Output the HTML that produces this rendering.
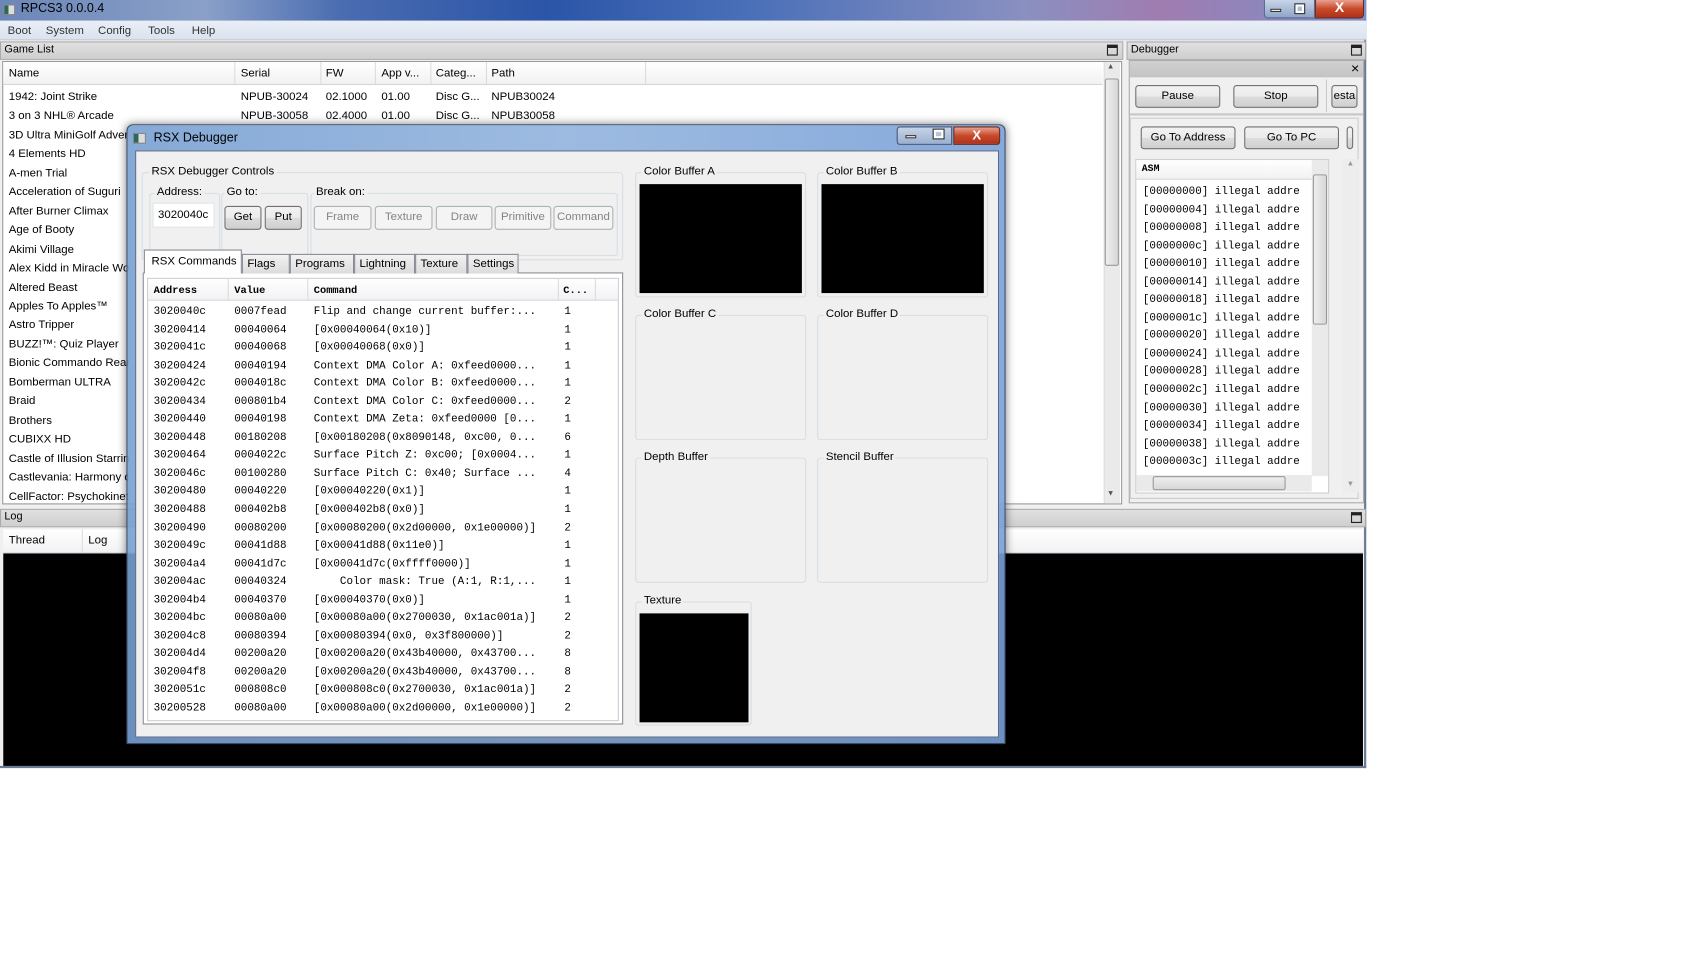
<!DOCTYPE html>
<html><head><meta charset="utf-8"><style>
*{box-sizing:border-box;margin:0;padding:0}
body{width:1708px;height:972px;overflow:hidden;background:#fff;font-family:"Liberation Sans",sans-serif;font-size:10.5px;color:#000}
#r{position:absolute;left:0;top:0;width:1568px;height:892px;transform:scale(1.0895);transform-origin:0 0}
.a{position:absolute}
.t{position:absolute;white-space:nowrap}
.m{font-family:"Liberation Mono",monospace;font-size:10px}
.btn{position:absolute;border:1px solid #707070;border-radius:3px;background:linear-gradient(#f2f2f2,#ebebeb 50%,#dddddd 51%,#cfcfcf);text-align:center;font-size:10.5px;line-height:19px}
.dis{border-color:#adb2b5;background:#f4f4f4;color:#838383}
.grp{position:absolute;border:1px solid #d5dfe5;border-radius:3px}
.gl{position:absolute;background:#f0f0f0;padding:0 2px;font-size:10.5px;white-space:nowrap}
.hdr{position:absolute;background:linear-gradient(#fff,#f1f2f4);border-bottom:1px solid #d5d5d5}
.sep{position:absolute;top:0;bottom:0;width:1px;background:#dcdcdc}
.tab{position:absolute;top:233px;height:18px;border:1px solid #898c95;border-bottom:none;background:linear-gradient(#f2f2f2,#dcdcdc);font-size:10.5px;line-height:16px;padding-left:4px}
</style></head><body><div id="r">
<div class="a" style="left:0;top:0;width:1254px;height:705px;background:#f0f0f0;border-right:2px solid #6a7a95;border-bottom:2px solid #6a7a95"></div>
<div class="a" style="left:0;top:0;width:1254px;height:19px;background:linear-gradient(90deg,#6b86b8 0%,#8aa0c8 15%,#4a6cb0 25%,#2b55a8 40%,#4a70b8 55%,#8a90c0 75%,#a07cb0 85%,#7a90c8 100%)"></div>
<div class="a" style="left:3px;top:4px;width:11px;height:10px;background:linear-gradient(90deg,#2a6a5a 40%,#ddd 40%);border:1px solid #888"></div>
<div class="t" style="left:19px;top:2px;font-size:11.5px;color:#000">RPCS3 0.0.0.4</div>
<div class="a" style="left:1160px;top:0;width:47px;height:17px;border:1px solid #5a6a8a;border-top:none;border-radius:0 0 0 4px;background:linear-gradient(#c8d4e8,#8ea4c8)"></div>
<div class="a" style="left:1166px;top:8px;width:10px;height:3px;background:#fff;border:1px solid #333"></div>
<div class="a" style="left:1189px;top:4px;width:8px;height:8px;border:2px solid #fff;outline:1px solid #333"></div>
<div class="a" style="left:1207px;top:0;width:45px;height:17px;border:1px solid #6a2a1a;border-top:none;border-radius:0 0 4px 0;background:linear-gradient(#e8a090,#c84a2a 50%,#b0301a);color:#fff;font-weight:bold;text-align:center;font-size:13px;line-height:14px">X</div>
<div class="a" style="left:0;top:19px;width:1254px;height:18px;background:linear-gradient(#e9eef6,#dbe3ef);border-bottom:1px solid #c0c8d4"></div>
<div class="t" style="left:7px;top:22px;color:#333">Boot</div><div class="t" style="left:42px;top:22px;color:#333">System</div><div class="t" style="left:90px;top:22px;color:#333">Config</div><div class="t" style="left:136px;top:22px;color:#333">Tools</div><div class="t" style="left:176px;top:22px;color:#333">Help</div>
<div class="a" style="left:0;top:38px;width:1031px;height:17px;background:linear-gradient(#e0e0e0,#cfcfcf);border:1px solid #aaa"></div>
<div class="t" style="left:4px;top:40px;font-size:10px">Game List</div>
<div class="a" style="left:1016px;top:41px;width:10px;height:10px;border:1px solid #222;border-top-width:3px"></div>
<div class="a" style="left:2px;top:56px;width:1028px;height:407px;background:#fff;border:1px solid #999"></div>
<div class="hdr" style="left:3px;top:57px;width:1009px;height:21px">
<div class="sep" style="left:212px"></div><div class="sep" style="left:291px"></div><div class="sep" style="left:341px"></div><div class="sep" style="left:392px"></div><div class="sep" style="left:443px"></div><div class="sep" style="left:589px"></div></div>
<div class="t" style="left:8px;top:61px">Name</div><div class="t" style="left:221px;top:61px">Serial</div><div class="t" style="left:299px;top:61px">FW</div><div class="t" style="left:350px;top:61px">App v...</div><div class="t" style="left:400px;top:61px">Categ...</div><div class="t" style="left:451px;top:61px">Path</div>
<div class="a" style="left:8px;top:81px;width:110px;height:380px;overflow:hidden;line-height:17.45px;white-space:nowrap">1942: Joint Strike<br>3 on 3 NHL® Arcade<br>3D Ultra MiniGolf Adventures<br>4 Elements HD<br>A-men Trial<br>Acceleration of Suguri<br>After Burner Climax<br>Age of Booty<br>Akimi Village<br>Alex Kidd in Miracle World<br>Altered Beast<br>Apples To Apples™<br>Astro Tripper<br>BUZZ!™: Quiz Player<br>Bionic Commando Rearmed<br>Bomberman ULTRA<br>Braid<br>Brothers<br>CUBIXX HD<br>Castle of Illusion Starring<br>Castlevania: Harmony of<br>CellFactor: Psychokinetic</div>
<div class="t" style="left:221px;top:81px;line-height:17.45px">NPUB-30024<br>NPUB-30058</div>
<div class="t" style="left:299px;top:81px;line-height:17.45px">02.1000<br>02.4000</div>
<div class="t" style="left:350px;top:81px;line-height:17.45px">01.00<br>01.00</div>
<div class="t" style="left:400px;top:81px;line-height:17.45px">Disc G...<br>Disc G...</div>
<div class="t" style="left:451px;top:81px;line-height:17.45px">NPUB30024<br>NPUB30058</div>
<div class="a" style="left:1013px;top:57px;width:15px;height:405px;background:#eaeaea;border-left:1px solid #ddd"></div>
<div class="a" style="left:1014px;top:72px;width:13px;height:172px;background:linear-gradient(90deg,#eee,#d8d8d8);border:1px solid #999;border-radius:2px"></div>
<div class="t" style="left:1016px;top:58px;font-size:7px;color:#555">▲</div><div class="t" style="left:1016px;top:450px;font-size:7px;color:#555">▼</div>
<div class="a" style="left:0;top:467px;width:1254px;height:17px;background:linear-gradient(#e0e0e0,#cfcfcf);border:1px solid #aaa"></div>
<div class="t" style="left:4px;top:469px;font-size:10px">Log</div>
<div class="a" style="left:1240px;top:470px;width:10px;height:10px;border:1px solid #222;border-top-width:3px"></div>
<div class="hdr" style="left:3px;top:486px;width:1248px;height:22px"><div class="sep" style="left:72px"></div></div>
<div class="t" style="left:8px;top:490px">Thread</div><div class="t" style="left:81px;top:490px">Log</div>
<div class="a" style="left:3px;top:508px;width:1248px;height:195px;background:#000"></div>
<div class="a" style="left:1034px;top:38px;width:220px;height:17px;background:linear-gradient(#e0e0e0,#cfcfcf);border:1px solid #aaa"></div>
<div class="t" style="left:1038px;top:40px;font-size:10px">Debugger</div>
<div class="a" style="left:1240px;top:41px;width:10px;height:10px;border:1px solid #222;border-top-width:3px"></div>
<div class="a" style="left:1036px;top:55px;width:216px;height:407px;border:1px solid #aaa;background:#f0f0f0"></div>
<div class="a" style="left:1037px;top:56px;width:214px;height:15px;background:linear-gradient(#d0d0d0,#c4c4c4)"></div>
<div class="t" style="left:1240px;top:55px;font-size:13px">×</div>
<div class="btn" style="left:1042px;top:78px;width:78px;height:21px">Pause</div>
<div class="btn" style="left:1132px;top:78px;width:78px;height:21px">Stop</div>
<div class="a" style="left:1217px;top:73px;width:1px;height:30px;background:#ccc"></div>
<div class="btn" style="left:1222px;top:78px;width:24px;height:21px;overflow:hidden">esta</div>
<div class="a" style="left:1037px;top:104px;width:214px;height:2px;background:#c8c8c8"></div>
<div class="a" style="left:1037px;top:108px;width:210px;height:350px;border:1px solid #ccc"></div>
<div class="btn" style="left:1047px;top:116px;width:87px;height:21px">Go To Address</div>
<div class="btn" style="left:1142px;top:116px;width:87px;height:21px">Go To PC</div>
<div class="btn" style="left:1236px;top:116px;width:6px;height:21px"></div>
<div class="a" style="left:1042px;top:146px;width:178px;height:307px;background:#fff;border:1px solid #ccc"></div>
<div class="hdr" style="left:1043px;top:147px;width:161px;height:18px"></div>
<div class="t m" style="left:1048px;top:150px;font-weight:bold;font-size:9px">ASM</div>
<div class="t m" style="left:1049px;top:169px;line-height:16.55px;font-size:10px">[00000000] illegal addre<br>[00000004] illegal addre<br>[00000008] illegal addre<br>[0000000c] illegal addre<br>[00000010] illegal addre<br>[00000014] illegal addre<br>[00000018] illegal addre<br>[0000001c] illegal addre<br>[00000020] illegal addre<br>[00000024] illegal addre<br>[00000028] illegal addre<br>[0000002c] illegal addre<br>[00000030] illegal addre<br>[00000034] illegal addre<br>[00000038] illegal addre<br>[0000003c] illegal addre</div>
<div class="a" style="left:1204px;top:147px;width:15px;height:290px;background:#eaeaea"></div>
<div class="a" style="left:1205px;top:160px;width:13px;height:138px;background:linear-gradient(90deg,#eee,#d8d8d8);border:1px solid #999;border-radius:2px"></div>
<div class="a" style="left:1043px;top:436px;width:161px;height:15px;background:#eaeaea"></div>
<div class="a" style="left:1058px;top:437px;width:122px;height:13px;background:linear-gradient(#eee,#d8d8d8);border:1px solid #999;border-radius:2px"></div>
<div class="a" style="left:1232px;top:146px;width:15px;height:306px;background:#ededed"></div>
<div class="t" style="left:1236px;top:147px;font-size:7px;color:#999">▲</div><div class="t" style="left:1236px;top:441px;font-size:7px;color:#999">▼</div>
<div class="a" style="left:116px;top:114px;width:807px;height:569px;border:1px solid #3a4a6a;border-radius:6px 6px 0 0;background:linear-gradient(90deg,rgba(120,160,210,.9),rgba(140,175,220,.85) 50%,rgba(120,160,215,.9));box-shadow:0 0 8px rgba(0,0,0,.5)"></div>
<div class="a" style="left:122px;top:122px;width:12px;height:10px;background:linear-gradient(90deg,#2a6a5a 40%,#ddd 40%);border:1px solid #888"></div>
<div class="t" style="left:141px;top:121px;font-size:11.5px">RSX Debugger</div>
<div class="a" style="left:823px;top:116px;width:51px;height:17px;border:1px solid #4a5a7a;border-radius:3px 0 0 3px;background:linear-gradient(#c8d4e8,#9ab0d0)"></div>
<div class="a" style="left:831px;top:124px;width:10px;height:3px;background:#fff;border:1px solid #333"></div>
<div class="a" style="left:857px;top:119px;width:9px;height:8px;border:2px solid #fff;outline:1px solid #333"></div>
<div class="a" style="left:875px;top:116px;width:43px;height:17px;border:1px solid #6a2a1a;border-radius:0 3px 3px 0;background:linear-gradient(#e8a090,#c84a2a 50%,#b0301a);color:#fff;font-weight:bold;text-align:center;font-size:12px;line-height:15px">X</div>
<div class="a" style="left:124px;top:138px;width:793px;height:539px;background:#f0f0f0;border:1px solid #5a6a8a"></div>
<div class="grp" style="left:130px;top:158px;width:442px;height:81px"></div><div class="gl" style="left:137px;top:151px">RSX Debugger Controls</div>
<div class="grp" style="left:137px;top:177px;width:65px;height:58px"></div><div class="gl" style="left:142px;top:170px">Address:</div>
<div class="a" style="left:140px;top:186px;width:57px;height:23px;background:#fff;border:1px solid #e0e3e8"></div><div class="t" style="left:145px;top:191px">3020040c</div>
<div class="grp" style="left:203px;top:177px;width:80px;height:58px"></div><div class="gl" style="left:206px;top:170px">Go to:</div>
<div class="btn" style="left:206px;top:189px;width:34px;height:22px">Get</div>
<div class="btn" style="left:243px;top:189px;width:34px;height:22px">Put</div>
<div class="grp" style="left:285px;top:177px;width:282px;height:58px"></div><div class="gl" style="left:288px;top:170px">Break on:</div>
<div class="btn dis" style="left:288px;top:189px;width:53px;height:22px">Frame</div>
<div class="btn dis" style="left:344px;top:189px;width:53px;height:22px">Texture</div>
<div class="btn dis" style="left:400px;top:189px;width:52px;height:22px">Draw</div>
<div class="btn dis" style="left:454px;top:189px;width:52px;height:22px">Primitive</div>
<div class="btn dis" style="left:508px;top:189px;width:55px;height:22px;overflow:hidden">Command</div>
<div class="a" style="left:131px;top:250px;width:441px;height:415px;background:#fff;border:1px solid #898c95"></div>
<div class="tab" style="left:222px;width:44px">Flags</div>
<div class="tab" style="left:266px;width:59px">Programs</div>
<div class="tab" style="left:325px;width:56px">Lightning</div>
<div class="tab" style="left:381px;width:48px">Texture</div>
<div class="tab" style="left:429px;width:47px">Settings</div>
<div class="tab" style="left:132px;top:229px;height:22px;width:90px;background:#fff;line-height:20px;padding-left:6px">RSX Commands</div>
<div class="a" style="left:135px;top:255px;width:433px;height:407px;background:#fff;border:1px solid #ccc"></div>
<div class="hdr" style="left:136px;top:256px;width:431px;height:20px"><div class="sep" style="left:73px"></div><div class="sep" style="left:146px"></div><div class="sep" style="left:376px"></div><div class="sep" style="left:410px"></div></div>
<div class="t m" style="left:141px;top:261px;font-weight:bold;font-size:9.5px">Address</div><div class="t m" style="left:215px;top:261px;font-weight:bold;font-size:9.5px">Value</div><div class="t m" style="left:288px;top:261px;font-weight:bold;font-size:9.5px">Command</div><div class="t m" style="left:517px;top:261px;font-weight:bold;font-size:9.5px">C...</div>
<div class="t m" style="left:141px;top:279px;line-height:16.55px">3020040c<br>30200414<br>3020041c<br>30200424<br>3020042c<br>30200434<br>30200440<br>30200448<br>30200464<br>3020046c<br>30200480<br>30200488<br>30200490<br>3020049c<br>302004a4<br>302004ac<br>302004b4<br>302004bc<br>302004c8<br>302004d4<br>302004f8<br>3020051c<br>30200528</div>
<div class="t m" style="left:215px;top:279px;line-height:16.55px">0007fead<br>00040064<br>00040068<br>00040194<br>0004018c<br>000801b4<br>00040198<br>00180208<br>0004022c<br>00100280<br>00040220<br>000402b8<br>00080200<br>00041d88<br>00041d7c<br>00040324<br>00040370<br>00080a00<br>00080394<br>00200a20<br>00200a20<br>000808c0<br>00080a00</div>
<div class="t m" style="left:288px;top:279px;line-height:16.55px;white-space:pre">Flip and change current buffer:...
[0x00040064(0x10)]
[0x00040068(0x0)]
Context DMA Color A: 0xfeed0000...
Context DMA Color B: 0xfeed0000...
Context DMA Color C: 0xfeed0000...
Context DMA Zeta: 0xfeed0000 [0...
[0x00180208(0x8090148, 0xc00, 0...
Surface Pitch Z: 0xc00; [0x0004...
Surface Pitch C: 0x40; Surface ...
[0x00040220(0x1)]
[0x000402b8(0x0)]
[0x00080200(0x2d00000, 0x1e00000)]
[0x00041d88(0x11e0)]
[0x00041d7c(0xffff0000)]
    Color mask: True (A:1, R:1,...
[0x00040370(0x0)]
[0x00080a00(0x2700030, 0x1ac001a)]
[0x00080394(0x0, 0x3f800000)]
[0x00200a20(0x43b40000, 0x43700...
[0x00200a20(0x43b40000, 0x43700...
[0x000808c0(0x2700030, 0x1ac001a)]
[0x00080a00(0x2d00000, 0x1e00000)]</div>
<div class="t m" style="left:518px;top:279px;line-height:16.55px">1<br>1<br>1<br>1<br>1<br>2<br>1<br>6<br>1<br>4<br>1<br>1<br>2<br>1<br>1<br>1<br>1<br>2<br>2<br>8<br>8<br>2<br>2</div>
<div class="grp" style="left:583px;top:158px;width:157px;height:115px"></div><div class="gl" style="left:589px;top:151px">Color Buffer A</div>
<div class="a" style="left:587px;top:169px;width:149px;height:100px;background:#000"></div>
<div class="grp" style="left:750px;top:158px;width:157px;height:115px"></div><div class="gl" style="left:756px;top:151px">Color Buffer B</div>
<div class="a" style="left:754px;top:169px;width:149px;height:100px;background:#000"></div>
<div class="grp" style="left:583px;top:289px;width:157px;height:115px"></div><div class="gl" style="left:589px;top:282px">Color Buffer C</div>
<div class="grp" style="left:750px;top:289px;width:157px;height:115px"></div><div class="gl" style="left:756px;top:282px">Color Buffer D</div>
<div class="grp" style="left:583px;top:420px;width:157px;height:115px"></div><div class="gl" style="left:589px;top:413px">Depth Buffer</div>
<div class="grp" style="left:750px;top:420px;width:157px;height:115px"></div><div class="gl" style="left:756px;top:413px">Stencil Buffer</div>
<div class="grp" style="left:583px;top:552px;width:107px;height:114px"></div><div class="gl" style="left:589px;top:545px">Texture</div>
<div class="a" style="left:587px;top:563px;width:100px;height:100px;background:#000"></div>
</div></body></html>
